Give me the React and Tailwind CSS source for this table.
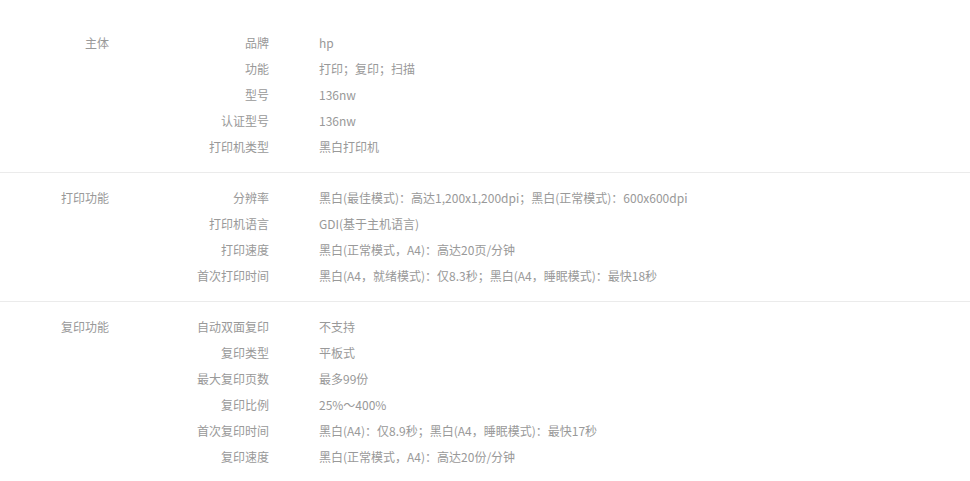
import React from "react";

const sections = [
  {
    title: "主体",
    rows: [
      ["品牌", "hp"],
      ["功能", "打印；复印；扫描"],
      ["型号", "136nw"],
      ["认证型号", "136nw"],
      ["打印机类型", "黑白打印机"],
    ],
  },
  {
    title: "打印功能",
    rows: [
      ["分辨率", "黑白(最佳模式)：高达1,200x1,200dpi；黑白(正常模式)：600x600dpi"],
      ["打印机语言", "GDI(基于主机语言)"],
      ["打印速度", "黑白(正常模式，A4)：高达20页/分钟"],
      ["首次打印时间", "黑白(A4，就绪模式)：仅8.3秒；黑白(A4，睡眠模式)：最快18秒"],
    ],
  },
  {
    title: "复印功能",
    rows: [
      ["自动双面复印", "不支持"],
      ["复印类型", "平板式"],
      ["最大复印页数", "最多99份"],
      ["复印比例", "25%～400%"],
      ["首次复印时间", "黑白(A4)：仅8.9秒；黑白(A4，睡眠模式)：最快17秒"],
      ["复印速度", "黑白(正常模式，A4)：高达20份/分钟"],
    ],
  },
];

export default function App() {
  return (
    <div
      className="w-[970px] h-[481px] bg-white pt-[18px] text-[12px] text-[#999]"
      style={{ fontFamily: '"Microsoft YaHei", "Noto Sans CJK SC", sans-serif' }}
    >
      {sections.map((s, i) => (
        <div
          key={i}
          className={`flex py-3 ${i < sections.length - 1 ? "border-b border-[#ebebeb]" : ""}`}
        >
          <div className="w-[109px] shrink-0 text-right leading-[26px]">{s.title}</div>
          <div className="flex flex-col">
            {s.rows.map(([k, v], j) => (
              <div key={j} className="flex h-[26px] items-center leading-[26px]">
                <div className="w-[160px] shrink-0 text-right">{k}</div>
                <div className="pl-[50px] whitespace-nowrap">{v}</div>
              </div>
            ))}
          </div>
        </div>
      ))}
    </div>
  );
}
